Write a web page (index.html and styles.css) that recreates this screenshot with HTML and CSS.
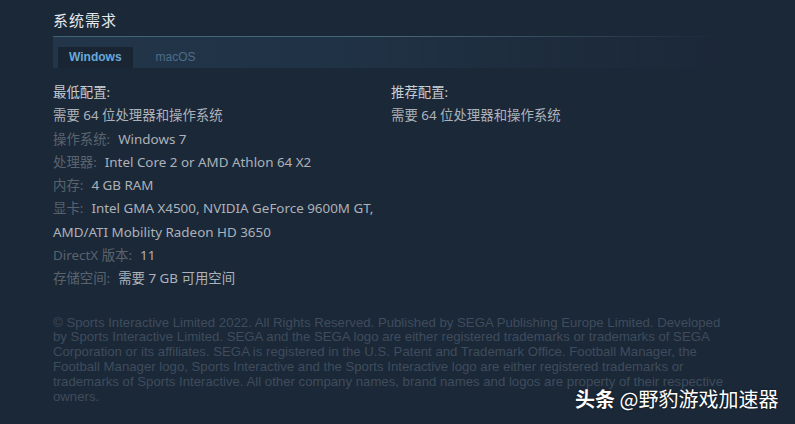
FILE: index.html
```html
<!DOCTYPE html>
<html lang="zh">
<head>
<meta charset="utf-8">
<link rel="stylesheet" href="styles.css">
</head>
<body>
<div class="page">
  <h2 class="title">系统需求</h2>
  <div class="tabs">
    <div class="tab active">Windows</div>
    <div class="tab">macOS</div>
  </div>
  <div class="cols">
    <div class="col left">
      <div class="head">最低配置:</div>
      <div class="row">需要 64 位处理器和操作系统</div>
      <div class="row"><span class="lbl">操作系统:</span>Windows 7</div>
      <div class="row"><span class="lbl">处理器:</span>Intel Core 2 or AMD Athlon 64 X2</div>
      <div class="row"><span class="lbl">内存:</span>4 GB RAM</div>
      <div class="row"><span class="lbl">显卡:</span>Intel GMA X4500, NVIDIA GeForce 9600M GT, AMD/ATI Mobility Radeon HD 3650</div>
      <div class="row"><span class="lbl">DirectX 版本:</span>11</div>
      <div class="row"><span class="lbl">存储空间:</span>需要 7 GB 可用空间</div>
    </div>
    <div class="col right">
      <div class="head">推荐配置:</div>
      <div class="row">需要 64 位处理器和操作系统</div>
    </div>
  </div>
  <p class="legal">© Sports Interactive Limited 2022. All Rights Reserved. Published by SEGA Publishing Europe Limited. Developed by Sports Interactive Limited. SEGA and the SEGA logo are either registered trademarks or trademarks of SEGA Corporation or its affiliates. SEGA is registered in the U.S. Patent and Trademark Office. Football Manager, the Football Manager logo, Sports Interactive and the Sports Interactive logo are either registered trademarks or trademarks of Sports Interactive. All other company names, brand names and logos are property of their respective owners.</p>
</div>
<div class="watermark"><b>头条</b> @野豹游戏加速器</div>
</body>
</html>
```
FILE: styles.css
```css
html, body {
  margin: 0;
  padding: 0;
  background: #1b2838;
  width: 795px;
  height: 424px;
  overflow: hidden;
  font-family: "Noto Sans", "Noto Sans CJK SC", sans-serif;
}
.page {
  padding: 10px 0 0 53px;
}
.title {
  margin: 0;
  font-family: "Noto Sans CJK SC", sans-serif;
  font-size: 15px;
  font-weight: normal;
  color: #e4e9ee;
  line-height: 20px;
  letter-spacing: 1px;
}
.tabs {
  margin-top: 6px;
  width: 660px;
  height: 31px;
  border-top: 1px solid transparent;
  border-image: linear-gradient(90deg, #3e6478 0%, #47677b 50%, rgba(71,103,123,0) 100%) 1;
  background: linear-gradient(90deg, #233649 0%, #203346 40%, rgba(30,45,62,0.6) 80%, rgba(27,40,56,0) 100%);
  display: flex;
  align-items: flex-end;
  padding-left: 5px;
}
.tab {
  font-family: "Liberation Sans", Arial, sans-serif;
  font-size: 12px;
  line-height: 21px;
  padding: 0 11px;
  color: #4d6c89;
}
.tab.active {
  background: #1a2533;
  color: #67a9d9;
  font-weight: bold;
  margin-right: 12px;
}
.cols {
  display: flex;
  margin-top: 13px;
}
.col.left {
  width: 330px;
  margin-right: 8px;
}
.col.right {
  width: 330px;
}
.head, .row {
  font-family: "Noto Sans", "Noto Sans CJK SC", sans-serif;
  font-size: 13.4px;
  line-height: 23.3px;
  color: #acb2b8;
}
.head {
  color: #c6cdd3;
}
.lbl {
  color: #59636e;
  margin-right: 8px;
}
.legal {
  margin: 25px 0 0 0;
  width: 680px;
  font-family: "Liberation Sans", Arial, sans-serif;
  font-size: 13.2px;
  line-height: 14.8px;
  color: #3f4c5c;
}
.watermark {
  position: absolute;
  left: 575px;
  top: 386px;
  font-family: "Noto Sans CJK SC", sans-serif;
  font-size: 20px;
  line-height: 26px;
  color: #ffffff;
  text-shadow: 0 0 2px rgba(0,0,0,0.7);
}
.watermark b {
  font-weight: bold;
}
```
